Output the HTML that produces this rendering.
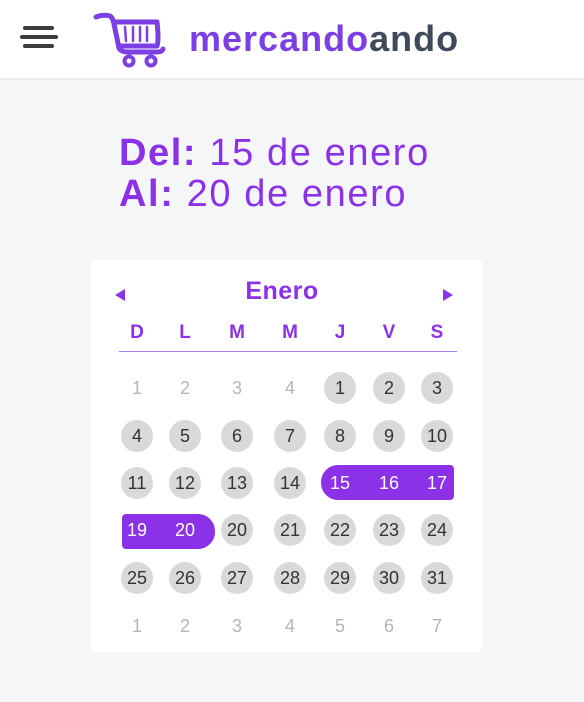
<!DOCTYPE html>
<html><head><meta charset="utf-8"><style>
*{margin:0;padding:0;box-sizing:border-box}
body{width:584px;height:702px;background:#f5f6f8;font-family:"Liberation Sans",sans-serif;position:relative;overflow:hidden}
.hdr{position:absolute;left:0;top:0;width:584px;height:80px;background:#fff;border-bottom:2px solid #eceef1}
.logo{position:absolute;left:189px;top:18px;font-size:36px;font-weight:bold;color:#7b3fe4;letter-spacing:1px}
.logo span{color:#3f4a5a}
.t{position:absolute;left:119px;font-size:38px;color:#8b31e8;line-height:40px;letter-spacing:1.6px}
.t b{font-weight:bold}
.card{position:absolute;left:91px;top:260px;width:392px;height:392px;background:#fff;border-radius:6px}
.c{position:absolute;width:32px;height:32px;line-height:32px;text-align:center;font-size:18px;color:#333;border-radius:50%}
.g{background:#d9d9d9}
.m{color:#b5b5b5}
.w{color:#fff}
.h{position:absolute;width:32px;text-align:center;font-size:19px;font-weight:bold;color:#8b31e8}
.pill{position:absolute;background:#8b31e8}
</style></head><body>
<div class="hdr">
<svg style="position:absolute;left:20px;top:25px" width="40" height="26" viewBox="0 0 40 26"><g stroke="#3d3d3d" stroke-width="4" stroke-linecap="round"><line x1="5" y1="3" x2="32" y2="3"/><line x1="2" y1="12" x2="36" y2="12"/><line x1="5" y1="21" x2="32" y2="21"/></g></svg>
<svg style="position:absolute;left:93px;top:12px" width="76" height="56" viewBox="0 0 76 56"><g fill="none" stroke="#7b3fe4" stroke-width="5" stroke-linecap="round" stroke-linejoin="round"><path d="M3 5 Q10 2 17 4 Q20 6 21 12 L26 36 Q28 40 35 40 L64 40 Q69 40 70 37"/><path d="M22 10 L64 10 Q66 28 64 34 L27 34"/><path d="M32 15 L33 29 M40 15 L40 29 M47 15 L47 29 M54 15 L54 29" stroke-width="2.5"/></g><g fill="none" stroke="#7b3fe4" stroke-width="4"><circle cx="36" cy="49" r="4.5"/><circle cx="58" cy="49" r="4.5"/></g></svg>
<div class="logo">mercando<span>ando</span></div>
</div>
<div class="t" style="top:133px"><b>Del:</b> 15 de enero</div>
<div class="t" style="top:174px"><b>Al:</b> 20 de enero</div>
<div class="card"></div>
<svg style="position:absolute;left:113px;top:288px" width="14" height="14"><path d="M12 1 L2 7 L12 13Z" fill="#8b31e8"/></svg>
<svg style="position:absolute;left:441px;top:288px" width="14" height="14"><path d="M2 1 L12 7 L2 13Z" fill="#8b31e8"/></svg>
<div style="position:absolute;left:182px;width:200px;top:277px;text-align:center;font-size:25px;color:#8b31e8;font-weight:bold;letter-spacing:0.5px">Enero</div>
<div style="position:absolute;left:119px;top:351px;width:338px;height:1px;background:#b07cf5"></div>
<div class="pill" style="left:321px;top:465px;width:133px;height:35px;border-radius:17px 4px 4px 17px"></div>
<div class="pill" style="left:122px;top:514px;width:93px;height:35px;border-radius:4px 17px 17px 4px"></div>
<div id="g"></div>
<script>
var xs=[137,185,237,290,340,389,437],ys=[388,436,483,530,578,626];
var h="";["D","L","M","M","J","V","S"].forEach(function(d,i){h+='<div class="h" style="left:'+(xs[i]-16)+'px;top:322px">'+d+'</div>'});
var rows=[["1m","2m","3m","4m","1g","2g","3g"],["4g","5g","6g","7g","8g","9g","10g"],["11g","12g","13g","14g","15w","16w","17w"],["19w","20w","20g","21g","22g","23g","24g"],["25g","26g","27g","28g","29g","30g","31g"],["1m","2m","3m","4m","5m","6m","7m"]];
rows.forEach(function(r,j){r.forEach(function(v,i){var t=v.slice(-1),n=v.slice(0,-1);h+='<div class="c '+t+'" style="left:'+(xs[i]-16)+'px;top:'+(ys[j]-16)+'px">'+n+'</div>'})});
document.getElementById("g").innerHTML=h;
</script>
</body></html>
